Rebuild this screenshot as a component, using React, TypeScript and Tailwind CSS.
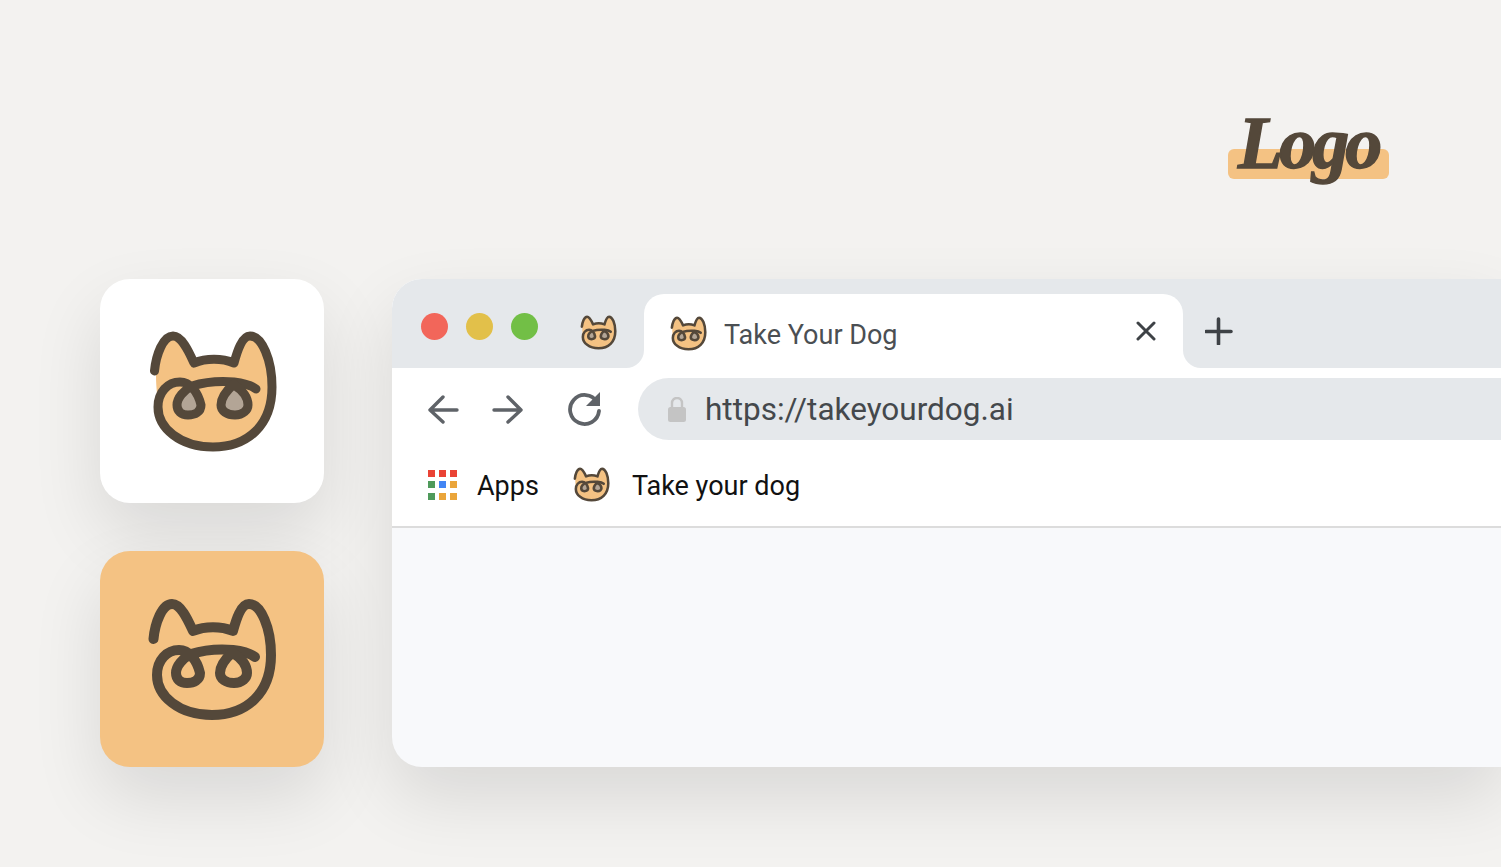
import React from "react";

function Cat({ filled = true, className = "", sw = 9 }: { filled?: boolean; className?: string; sw?: number }) {
  return (
    <svg viewBox="18 20 130 123" className={className} fill="none">
      {filled && (
        <>
          <path d="M26 66 C26 45 33 26 43 26 C52 26 60 44 64 53 C76 48 92 48 104 53 C107 42 112 26 120 26 C132 26 142 50 142 77 C142 115 118 137 83 137 C50 137 28 118 28 97 C28 90 26 78 26 66 Z" fill="#f4c283" />
          <path d="M61 78 C54 84 48 90 48 96 C48 102 52 105 58 105 C64 105 68 101 68 96 C68 90 66 84 61 78 Z" fill="#b3a596" />
          <path d="M104 78 C98 84 92 90 92 95 C92 101 98 105 105 105 C112 105 117 100 117 95 C117 89 110 82 104 78 Z" fill="#b3a596" />
        </>
      )}
      <path
        d="M24.5 61 C26 45 33 26 43 26 C52 26 59 42 64 53 C76 48 92 48 104 53 C107 42 112 26 120 26 C132 26 142 50 142 77 C142 115 118 137 83 137 C50 137 28 118 28 97 C28 82 38 72 50 72 C60 72 68 82 71 95 C71 102 65 105 58 105 C51 105 47 101 47 95 C47 88 54 80 62 76 C75 72 92 71 104 72 C112 73 121 75 126 79"
        stroke="#54483a"
        strokeWidth={sw}
        strokeLinecap="round"
        strokeLinejoin="round"
      />
      <path
        d="M104 74 C96 81 91 88 91 95 C91 101 97 105 105 105 C113 105 118 100 118 95 C118 87 112 80 104 75"
        stroke="#54483a"
        strokeWidth={sw}
        strokeLinecap="round"
        strokeLinejoin="round"
      />
    </svg>
  );
}

const dots = [
  "bg-[#ea4335]", "bg-[#ea4335]", "bg-[#ea4335]",
  "bg-[#4f9a5b]", "bg-[#4285f4]", "bg-[#eaa53a]",
  "bg-[#4f9a5b]", "bg-[#eaa53a]", "bg-[#eaa53a]",
];

export default function App() {
  return (
    <div className="w-[1501px] h-[867px] overflow-hidden bg-[#f3f2f0] font-['Roboto',sans-serif]">
      <header className="h-[279px] flex justify-end items-start pt-[149px] pr-[112px]">
        <div className="relative w-[161px] h-[30px] rounded-[6px] bg-[#f4c283]">
          <span className="absolute left-[10px] top-[-50px] text-[74px] leading-[1.2] font-bold italic text-[#54483a] font-['Liberation_Serif',serif] tracking-[-4px] [-webkit-text-stroke:1.5px_#54483a]">
            Logo
          </span>
        </div>
      </header>

      <main className="flex items-start gap-[68px] pl-[100px]">
        <div className="w-[224px] flex flex-col gap-[48px]">
          <div className="h-[224px] rounded-[30px] bg-white flex items-center justify-center shadow-[0_30px_70px_rgba(0,0,0,0.11)]">
            <Cat className="w-[130px] h-[123px] ml-[2px]" />
          </div>
          <div className="h-[216px] rounded-[30px] bg-[#f4c283] flex items-center justify-center shadow-[0_30px_70px_rgba(0,0,0,0.11)]">
            <Cat filled={false} sw={10} className="w-[130px] h-[123px]" />
          </div>
        </div>

        <div className="flex-1 h-[488px] rounded-l-[30px] overflow-hidden bg-[#f8f9fb] flex flex-col shadow-[0_30px_70px_rgba(0,0,0,0.11)]">
          <div className="bg-white flex h-[89px] shrink-0">
            <div className="w-[252px] bg-[#e5e8eb] rounded-br-[18px] flex items-start pl-[29px] pt-[34px]">
              <div className="w-[27px] h-[27px] rounded-full bg-[#f2665a]" />
              <div className="w-[27px] h-[27px] rounded-full bg-[#e2c04a] ml-[18px]" />
              <div className="w-[27px] h-[27px] rounded-full bg-[#72bf46] ml-[18px]" />
              <Cat className="w-[37px] h-[35px] ml-[42px] mt-[2px]" />
            </div>
            <div className="w-[539px] bg-[#e5e8eb] pt-[15px]">
              <div className="h-[74px] bg-white rounded-t-[20px] flex items-center pl-[26px] pr-[27px]">
                <Cat className="w-[37px] h-[35px] mt-[4px]" />
                <span className="ml-[17px] flex-1 text-[27px] text-[#4b4f53] mt-[8px]">Take Your Dog</span>
                <svg viewBox="0 0 20 20" className="w-[20px] h-[20px]" fill="none" stroke="#3e4246" strokeWidth="3" strokeLinecap="round">
                  <path d="M2 2 L18 18 M18 2 L2 18" />
                </svg>
              </div>
            </div>
            <div className="flex-1 bg-[#e5e8eb] rounded-bl-[18px] flex items-start pl-[22px] pt-[38px]">
              <svg viewBox="0 0 28 28" className="w-[28px] h-[28px]" fill="none" stroke="#3e4246" strokeWidth="3.6" strokeLinecap="round">
                <path d="M13.5 2 V27 M1 14.5 H26" />
              </svg>
            </div>
          </div>

          <div className="bg-white h-[72px] shrink-0 flex items-start pt-[10px]">
            <div className="h-[62px] flex items-center pl-[35px]">
              <svg viewBox="0 0 32 30" className="w-[32px] h-[30px]" fill="none" stroke="#5f6368" strokeWidth="3.4" strokeLinecap="round" strokeLinejoin="round">
                <path d="M30 16 H3 M16 3 L3 16 L16 28" />
              </svg>
              <svg viewBox="0 0 32 30" className="w-[32px] h-[30px] ml-[33px]" fill="none" stroke="#5f6368" strokeWidth="3.4" strokeLinecap="round" strokeLinejoin="round">
                <path d="M2 16 H29 M16 3 L29 16 L16 28" />
              </svg>
              <svg viewBox="0 0 36 36" className="w-[36px] h-[36px] ml-[44px]" fill="none">
                <path d="M29 11 A14.5 14.5 0 1 0 31 20" stroke="#5f6368" strokeWidth="3.8" strokeLinecap="round" />
                <path d="M32 1 V15 H18 Z" fill="#5f6368" />
              </svg>
            </div>
            <div className="ml-[34px] flex-1 h-[62px] rounded-l-[31px] bg-[#e5e8eb] flex items-center pl-[30px]">
              <svg viewBox="0 0 18 25" className="w-[18px] h-[25px]" fill="#c4c4c4">
                <rect x="0" y="10" width="18" height="15" rx="2.5" />
                <path d="M4 11 V6 A5 5 0 0 1 14 6 V11" fill="none" stroke="#c4c4c4" strokeWidth="2.4" />
              </svg>
              <span className="ml-[19px] mt-[1px] text-[31.5px] text-[#44484c]">https://takeyourdog.ai</span>
            </div>
          </div>

          <div className="bg-white h-[88px] shrink-0 border-b-2 border-[#dcdcdc] flex items-center pl-[36px] pt-[6px]">
            <div className="grid grid-cols-[7px_7px_7px] gap-x-[4px] gap-y-[4.5px] -mt-[3px]">
              {dots.map((c, i) => (
                <div key={i} className={`w-[7px] h-[7px] ${c}`} />
              ))}
            </div>
            <span className="ml-[20px] text-[27px] text-[#111111]">Apps</span>
            <Cat className="w-[37px] h-[35px] ml-[34px] -mt-[4px]" />
            <span className="ml-[22px] text-[27px] text-[#111111]">Take your dog</span>
          </div>
        </div>
      </main>
    </div>
  );
}
